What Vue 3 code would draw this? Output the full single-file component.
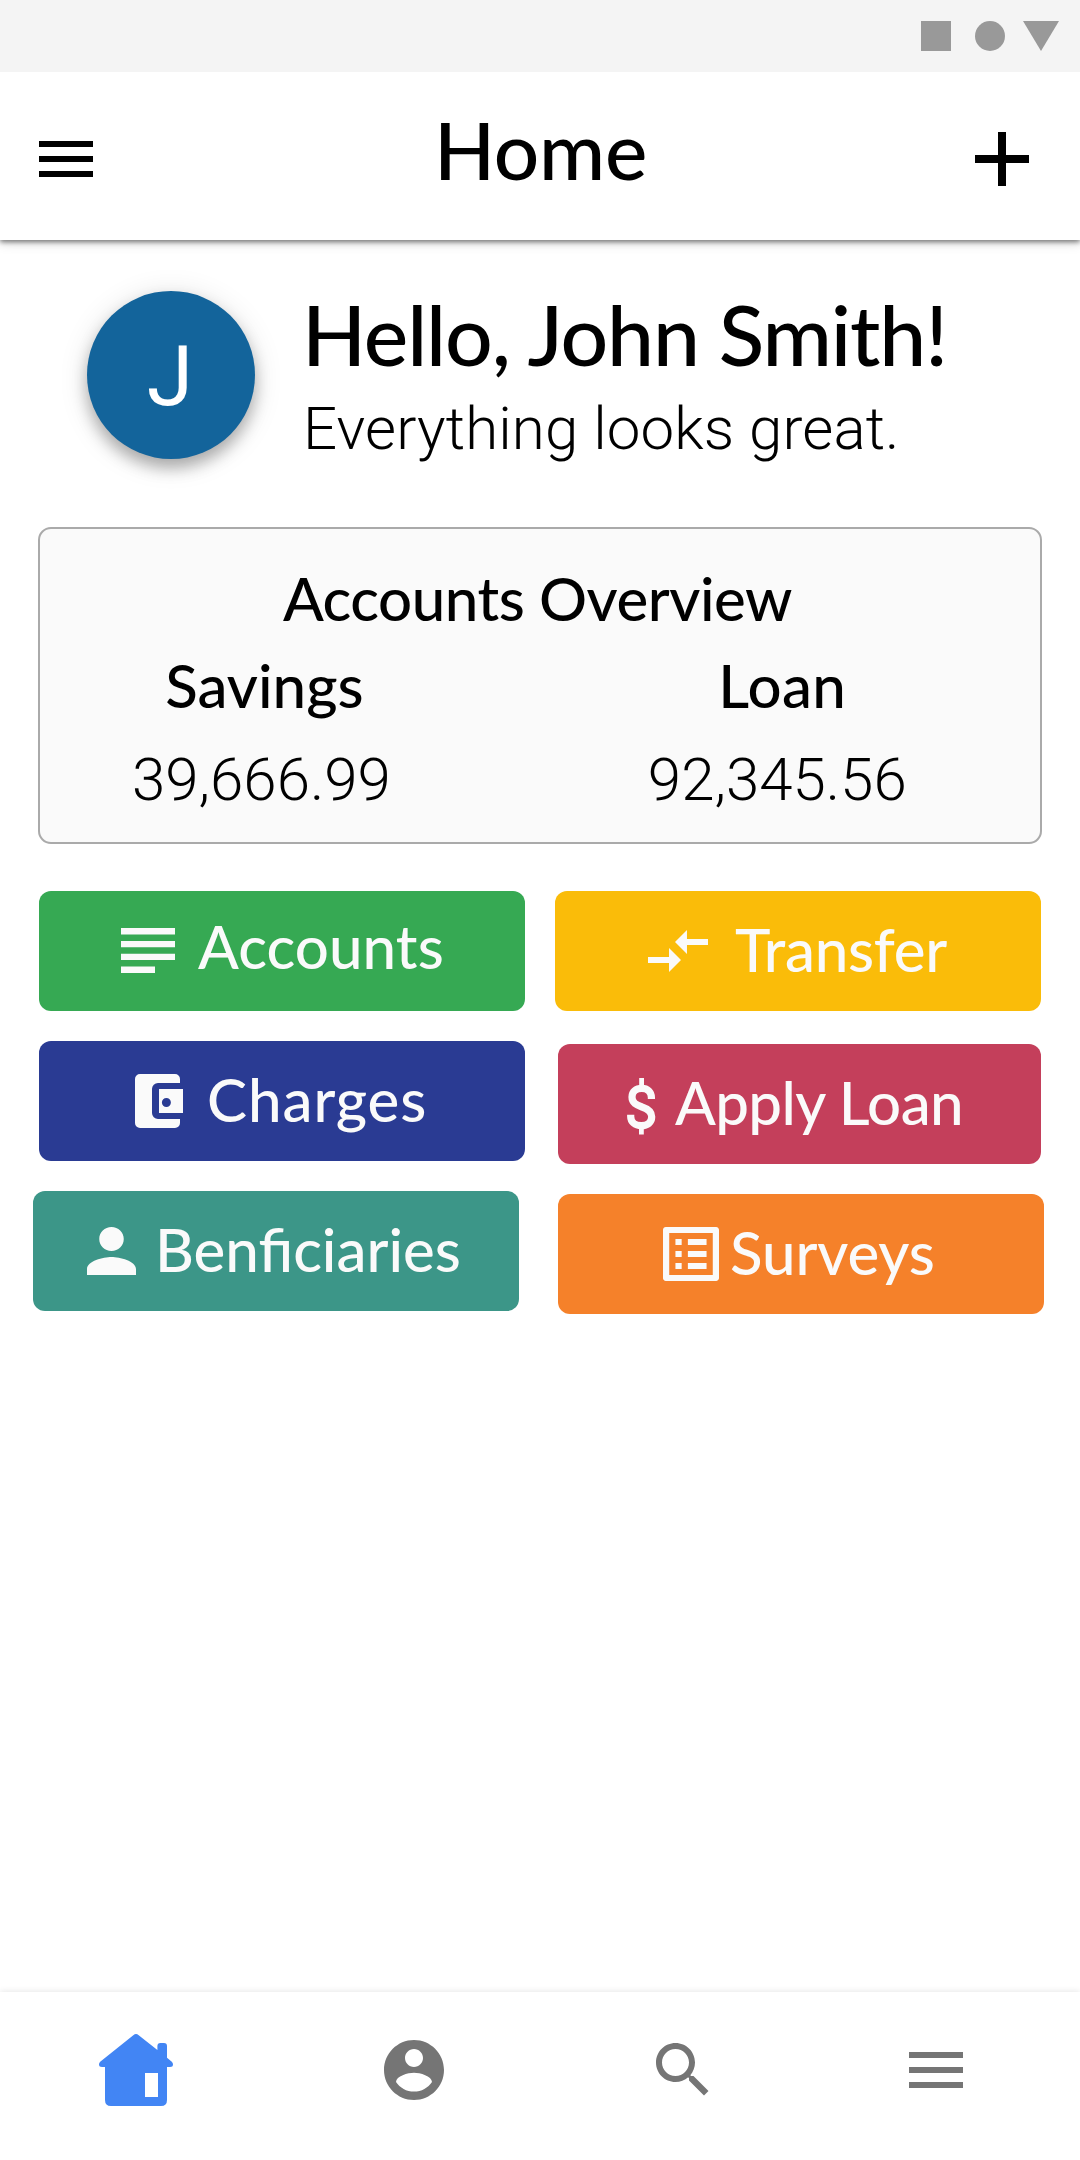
<script setup>
const accounts = [
  { id: 'savings', name: 'Savings', amount: '39,666.99' },
  { id: 'loan', name: 'Loan', amount: '92,345.56' },
]

const columns = [
  [
    { id: 'accounts', label: 'Accounts' },
    { id: 'charges', label: 'Charges' },
    { id: 'beneficiaries', label: 'Benficiaries' },
  ],
  [
    { id: 'transfer', label: 'Transfer' },
    { id: 'apply', label: 'Apply Loan' },
    { id: 'surveys', label: 'Surveys' },
  ],
]
</script>

<template>
  <div class="screen">
    <div class="status">
      <svg width="138" height="30" viewBox="0 0 138 30" fill="#999">
        <path d="M0 0h30v30H0z" />
        <circle cx="69" cy="15" r="15" />
        <path d="M102 0h36l-18 30z" />
      </svg>
    </div>

    <header class="topbar">
      <svg class="menu" width="54" height="36" viewBox="0 0 54 36">
        <path d="M0 0h54v6H0zM0 15h54v6H0zM0 30h54v6H0z" />
      </svg>
      <h1>Home</h1>
      <svg class="plus" width="54" height="54" viewBox="0 0 54 54">
        <path d="M23 0h8v23h23v8H31v23h-8V31H0v-8h23z" />
      </svg>
    </header>

    <section class="greeting">
      <div class="avatar">J</div>
      <div class="welcome">
        <h2>Hello, John Smith!</h2>
        <p>Everything looks great.</p>
      </div>
    </section>

    <section class="overview">
      <h3>Accounts Overview</h3>
      <div class="balances">
        <div v-for="a in accounts" :key="a.id" class="balance" :class="a.id">
          <h4>{{ a.name }}</h4>
          <p>{{ a.amount }}</p>
        </div>
      </div>
    </section>

    <section class="actions">
      <div v-for="(col, i) in columns" :key="i" class="column">
        <button v-for="b in col" :key="b.id" type="button" :class="b.id">
          <svg v-if="b.id === 'accounts'" width="54" height="45" viewBox="0 0 54 45">
            <path d="M0 0h54v6.4H0zM0 12.9h54v6.4H0zM0 25.7h54v6.4H0zM0 38.6h34V45H0z" />
          </svg>
          <svg v-else-if="b.id === 'charges'" width="48" height="54" viewBox="0 0 48 54">
            <path d="M5 0h35a5 5 0 0 1 5 5v4H23a6 6 0 0 0-6 6v24a6 6 0 0 0 6 6h22v4a5 5 0 0 1-5 5H5a5 5 0 0 1-5-5V5a5 5 0 0 1 5-5z" />
            <path fill-rule="evenodd" d="M24 15h24v24H24zM31.4 24a4.5 4.5 0 1 0 0 9 4.5 4.5 0 0 0 0-9z" />
          </svg>
          <svg v-else-if="b.id === 'beneficiaries'" width="49" height="48" viewBox="4 4 16 16" preserveAspectRatio="none">
            <path d="M12 12c2.21 0 4-1.79 4-4s-1.79-4-4-4-4 1.79-4 4 1.79 4 4 4zm0 2c-2.67 0-8 1.34-8 4v2h16v-2c0-2.66-5.33-4-8-4z" />
          </svg>
          <svg v-else-if="b.id === 'transfer'" width="60" height="42" viewBox="2 5 20 14">
            <path d="M9.01 14H2v2h7.01v3L13 15l-3.99-4v3zm5.98-1v-3H22V8h-7.01V5L11 9l3.99 4z" />
          </svg>
          <svg v-else-if="b.id === 'apply'" width="29" height="57" viewBox="0 0 29 57">
            <path d="M12.2 0H17v9h-4.8zM12 49h4.8v7.5H12z" />
            <path fill="none" stroke="#fafafa" stroke-width="7.2" d="M24.4 21V19.5C24.4 13.8 20.5 10.4 14.8 10.4C9 10.4 5 13.9 5 19C5 25 9.5 27 15 29C21 31 24.7 33.6 24.7 38.8C24.7 44.5 20.5 47.6 14.3 47.6C8 47.6 3.7 44 3.7 38.5V36.7" />
          </svg>
          <svg v-else width="56" height="54" viewBox="3 3 18 18" preserveAspectRatio="none">
            <path d="M19 5v14H5V5h14m1.1-2H3.9c-.5 0-.9.4-.9.9v16.2c0 .4.4.9.9.9h16.2c.4 0 .9-.5.9-.9V3.9c0-.5-.5-.9-.9-.9zM11 7h6v2h-6V7zm0 4h6v2h-6v-2zm0 4h6v2h-6zM7 7h2v2H7zm0 4h2v2H7zm0 4h2v2H7z" />
          </svg>
          <span>{{ b.label }}</span>
        </button>
      </div>
    </section>

    <nav class="tabs">
      <svg class="home" width="74" height="72" viewBox="0 0 74 72">
        <path fill-rule="evenodd" d="M34.3 1.2Q37 -1.2 39.7 1.2L58.4 16V12Q58.4 9 61.4 9H65Q68 9 68 12V23.7L72.8 27.8Q74 29 74 30.5Q74 33 71 33H68V66Q68 72 62 72H12Q6 72 6 66V33H3Q0 33 0 30.5Q0 29 1.2 27.8ZM46 39V63H59V39Z" />
      </svg>
      <svg class="profile" width="72" height="72" viewBox="0 0 24 24">
        <path d="M12 2C6.48 2 2 6.48 2 12s4.48 10 10 10 10-4.48 10-10S17.52 2 12 2zm0 3c1.66 0 3 1.34 3 3s-1.34 3-3 3-3-1.34-3-3 1.34-3 3-3zm0 14.2c-2.5 0-4.71-1.28-6-3.22.03-1.99 4-3.08 6-3.08 1.99 0 5.97 1.09 6 3.08-1.29 1.94-3.5 3.22-6 3.22z" />
      </svg>
      <svg class="search" width="72" height="72" viewBox="0 0 24 24">
        <path d="M15.5 14h-.79l-.28-.27C15.41 12.59 16 11.11 16 9.5 16 5.91 13.09 3 9.5 3S3 5.91 3 9.5 5.91 16 9.5 16c1.61 0 3.09-.59 4.23-1.57l.27.28v.79l5 4.99L20.49 19l-4.99-5zm-6 0C7.01 14 5 11.99 5 9.5S7.01 5 9.5 5 14 7.01 14 9.5 11.99 14 9.5 14z" />
      </svg>
      <svg class="more" width="72" height="72" viewBox="0 0 24 24">
        <path d="M3 18h18v-2H3v2zm0-5h18v-2H3v2zm0-7v2h18V6H3z" />
      </svg>
    </nav>
  </div>
</template>

<style>
body {
  background: #fff;
}
</style>

<style scoped>
.screen {
  width: 1080px;
  height: 2160px;
  display: flex;
  flex-direction: column;
  overflow: hidden;
  background: #fff;
  color: #000;
  font-family: Lato, sans-serif;
  font-weight: 500;
}
svg {
  display: block;
  flex: none;
}
h1, h2, h3, h4, p {
  margin: 0;
  font-weight: 500;
  white-space: nowrap;
}
.status {
  position: relative;
  z-index: 1;
  height: 72px;
  display: flex;
  justify-content: flex-end;
  align-items: center;
  box-sizing: border-box;
  padding-right: 21px;
  background: #f4f4f4;
}
.topbar {
  height: 168px;
  display: flex;
  justify-content: space-between;
  align-items: flex-start;
  box-sizing: border-box;
  padding: 0 51px 0 39px;
  box-shadow: 0 2px 5px rgba(0, 0, 0, 0.5), 0 3px 12px rgba(0, 0, 0, 0.12);
}
.menu {
  margin-top: 69px;
}
.plus {
  margin-top: 60px;
}
.topbar h1 {
  margin: 27px 0 0 13px;
  font-size: 80px;
  line-height: 100px;
  letter-spacing: -0.2px;
}
.greeting {
  height: 287px;
  display: flex;
  box-sizing: border-box;
  padding: 51px 0 0 87px;
}
.avatar {
  width: 168px;
  height: 168px;
  flex: none;
  border-radius: 50%;
  background: #13649b;
  color: #fff;
  box-shadow: 0 9px 15px rgba(0, 0, 0, 0.28), 0 4px 30px rgba(0, 0, 0, 0.12);
  font: 400 84px/172px Roboto, sans-serif;
  text-align: center;
  text-indent: -2px;
}
.welcome {
  margin-left: 47px;
}
.welcome h2 {
  font-size: 84px;
  line-height: 100px;
  letter-spacing: -1.15px;
  margin-top: -7px;
}
.welcome p {
  margin: 10px 0 0 1px;
  font: 300 60px/70px Roboto, sans-serif;
  letter-spacing: 0.12px;
}
.overview {
  height: 317px;
  margin: 0 38px 0 38px;
  box-sizing: border-box;
  padding-top: 31px;
  border: 2px solid #aaa;
  border-radius: 13px;
  background: #fafafa;
}
.overview h3 {
  margin-left: 243px;
  font-size: 60px;
  line-height: 76px;
  letter-spacing: -0.46px;
}
.balances {
  display: flex;
  margin-top: 11px;
}
.balance {
  display: flex;
  flex-direction: column;
  align-items: center;
}
.savings {
  margin-left: 92px;
}
.loan {
  margin-left: 257px;
}
.balance h4 {
  font-size: 60px;
  line-height: 76px;
}
.loan h4 {
  letter-spacing: 0.4px;
  margin-left: 10px;
}
.savings h4 {
  margin-left: 6px;
}
.balance p {
  margin-top: 22px;
  font: 300 60px/70px Roboto, sans-serif;
}
.actions {
  display: flex;
  align-items: flex-start;
  padding: 47px 0 0 39px;
}
.column {
  width: 516px;
  display: flex;
  flex-direction: column;
  gap: 30px;
}
button {
  width: 486px;
  height: 120px;
  display: flex;
  align-items: flex-start;
  border: 0;
  border-radius: 12px;
  padding: 0;
  color: #fafafa;
  fill: #fafafa;
  font: 500 60px/76px Lato, sans-serif;
  text-align: left;
  white-space: nowrap;
}
button span {
  margin-top: 20px;
}
.accounts { background: #36a953; }
.accounts svg { margin: 37px 23px 0 82px; }
.accounts span { margin-top: 17px; letter-spacing: 0.1px; }
.charges { background: #2a3b93; }
.charges svg { margin: 33px 24px 0 96px; }
.charges span { letter-spacing: 0.95px; }
.beneficiaries { background: #3c9688; margin-left: -6px; }
.beneficiaries svg { margin: 36px 19px 0 54px; }
.transfer { background: #fabc09; }
.transfer svg { margin: 39px 27px 0 93px; }
.transfer span { letter-spacing: -0.3px; }
.apply { background: #c43f5b; width: 483px; margin: 3px 0 0 3px; }
.apply svg { margin: 34px 19px 0 69px; }
.apply span { letter-spacing: -0.6px; }
.surveys { background: #f5812a; margin-left: 3px; }
.surveys svg { margin: 33px 11px 0 105px; }
.surveys span { letter-spacing: -0.1px; }
.tabs {
  height: 168px;
  margin-top: auto;
  display: flex;
  align-items: flex-start;
  box-sizing: border-box;
  padding: 42px 0 0 99px;
  background: #fff;
  fill: #757575;
  box-shadow: 0 -1px 6px rgba(0, 0, 0, 0.09);
}
.home { fill: #4285f4; }
.profile { margin-left: 205px; }
.search { margin-left: 197px; }
.more { margin-left: 181px; }
</style>
